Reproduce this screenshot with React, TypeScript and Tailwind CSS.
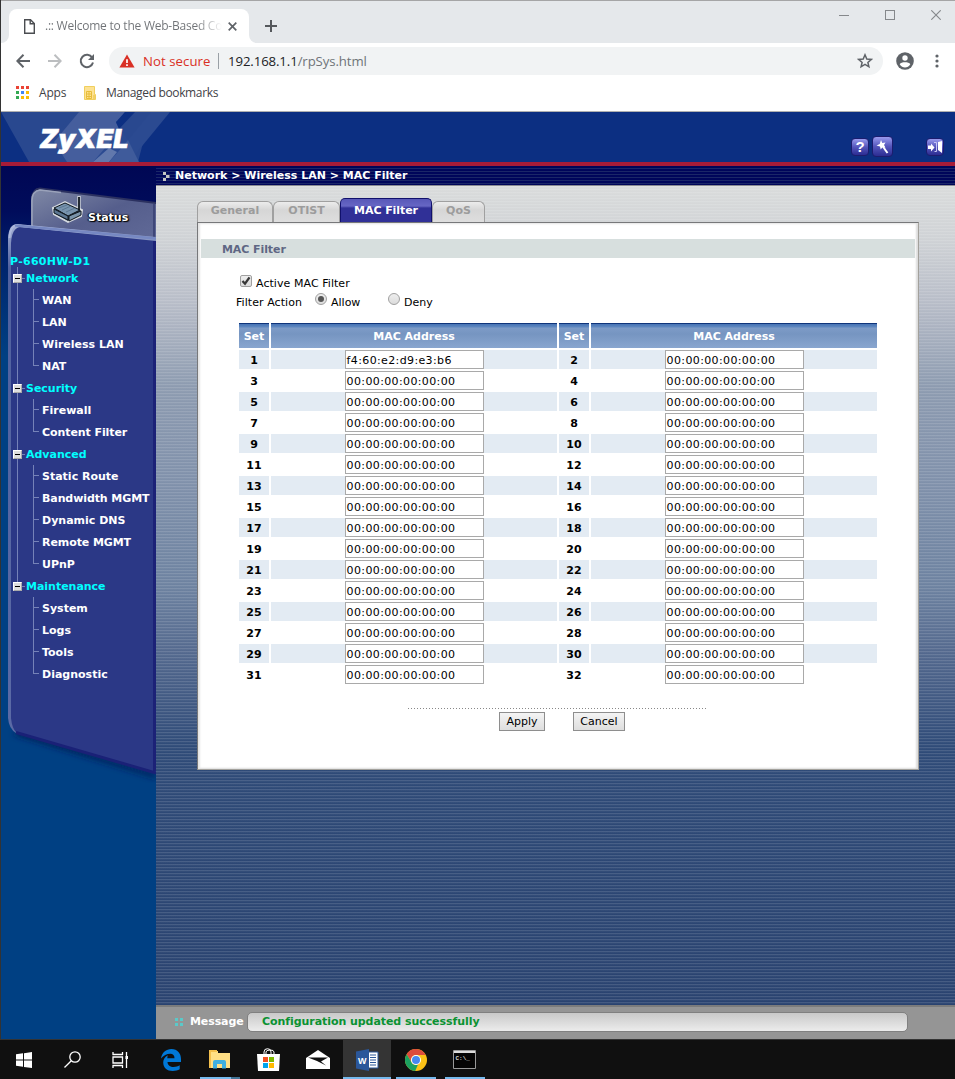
import React from "react";

const UI = "font-['Open_Sans','Noto_Sans',sans-serif]";
const VERDANA = "font-['DejaVu_Sans',Verdana,sans-serif]";

function TabStrip() {
  return (
    <div className="flex h-[43px] border-t border-[#a5a5a6] bg-[#e5e8eb]">
      <div className="flex w-2 flex-col justify-end bg-white">
        <div className="h-full rounded-br-[8px] bg-[#e5e8eb]" />
      </div>
      <div className="mt-2 flex w-[240px] items-center rounded-t-[8px] bg-white pl-[15px]">
        <svg width="11" height="15" viewBox="0 0 11 15" fill="none" stroke="#4a4d51" strokeWidth="1.4">
          <path d="M.7.7H6.5L10.3 4.5V14.3H.7Z" />
          <path d="M6.2.7V4.8H10.3" />
        </svg>
        <div className="ml-[10px] w-[177px] whitespace-nowrap bg-gradient-to-r from-[#6f7276] from-85% to-transparent bg-clip-text text-[12px] leading-[18px] tracking-[-0.24px] text-transparent">
          .:: Welcome to the Web-Based Co
        </div>
        <svg className="ml-[6px]" width="9" height="9" viewBox="0 0 9 9" stroke="#5f6368" strokeWidth="1.7">
          <path d="M.7.7 8.3 8.3M8.3.7.7 8.3" />
        </svg>
      </div>
      <div className="flex w-2 flex-col bg-white">
        <div className="h-full rounded-bl-[8px] bg-[#e5e8eb]" />
      </div>
      <svg className="ml-[8px] mt-[19px]" width="12" height="12" viewBox="0 0 12 12" stroke="#55585c" strokeWidth="2">
        <path d="M6 0V12M0 6H12" />
      </svg>
      <div className="flex-1" />
      <div className="mr-[14px] mt-[8px] flex h-[12px] items-center gap-[36px]">
        <svg width="10" height="10" stroke="#85888b" strokeWidth="1"><path d="M0 5.5H10" /></svg>
        <svg width="10" height="10" fill="none" stroke="#85888b"><rect x=".5" y=".5" width="9" height="9" /></svg>
        <svg width="10" height="10" stroke="#85888b" strokeWidth="1.1"><path d="M.3.3 9.7 9.7M9.7.3.3 9.7" /></svg>
      </div>
    </div>
  );
}

function Toolbar() {
  return (
    <div className="flex h-[36px] items-center bg-white pl-[15px] pr-[14px]">
      <svg width="14" height="14" viewBox="0 0 14 14" fill="none" stroke="#5f6368" strokeWidth="2"><path d="M14 7H1.5M7.5.8 1.3 7l6.2 6.2" /></svg>
      <svg className="ml-[18px]" width="14" height="14" viewBox="0 0 14 14" fill="none" stroke="#bcbec0" strokeWidth="2"><path d="M0 7H12.5M6.5.8 12.7 7l-6.2 6.2" /></svg>
      <svg className="ml-[17px]" width="16" height="16" viewBox="0 0 16 16">
        <path d="M13.2 4.6A6.2 6.2 0 1 0 14 9.6" fill="none" stroke="#5f6368" strokeWidth="2" />
        <path d="M15 1V7H9Z" fill="#5f6368" />
      </svg>
      <div className="ml-[14px] flex h-[28px] w-[774px] items-center rounded-full bg-[#f1f3f4] pl-[10px] pr-[10px] text-[14px]">
        <svg width="16" height="14" viewBox="0 0 16 14"><path d="M8 .5 15.6 13.6H.4Z" fill="#d93025" /><path d="M8 5.2V9M8 10.3v1.6" stroke="#fff" strokeWidth="1.7" /></svg>
        <span className="ml-[8px] w-[67px] whitespace-nowrap pt-px text-[13.2px] tracking-[0.06px] text-[#d93025]">Not secure</span>
        <span className="ml-[8px] h-[16px] w-px bg-[#9aa0a6]" />
        <span className="ml-[9px] whitespace-nowrap pt-px text-[13.2px] tracking-[-0.1px] text-[#6f7378]"><span className="text-[#202124]">192.168.1.1</span>/rpSys.html</span>
        <svg className="ml-auto" width="16" height="16" viewBox="0 0 16 16" fill="none" stroke="#5f6368" strokeWidth="1.5"><path d="M8 1.8 9.8 6l4.5.4-3.4 3 1 4.4L8 11.4l-3.9 2.4 1-4.4-3.4-3L6.2 6Z" /></svg>
      </div>
      <svg className="ml-[13px]" width="18" height="18" viewBox="0 0 18 18"><circle cx="9" cy="9" r="8.8" fill="#5f6368" /><circle cx="9" cy="6" r="2.7" fill="#fff" /><path d="M3.7 12.2C5 9.6 13 9.6 14.3 12.2 13 14.5 11 15.5 9 15.5S5 14.5 3.7 12.2Z" fill="#fff" /></svg>
      <svg className="ml-auto mr-[2px]" width="4" height="14" viewBox="0 0 4 14" fill="#5f6368"><circle cx="2" cy="2" r="1.6" /><circle cx="2" cy="7" r="1.6" /><circle cx="2" cy="12" r="1.6" /></svg>
    </div>
  );
}

const appDots = ["#ea4335", "#ea4335", "#ea4335", "#34a853", "#4285f4", "#fbbc05", "#34a853", "#fbbc05", "#fbbc05"];

function Bookmarks() {
  return (
    <div className="flex h-[33px] items-center border-b border-[#b0b0b0] bg-white pb-[5px] pl-[15px] text-[12px] text-[#3f4246]">
      <svg width="13" height="13">
        {appDots.map((c, i) => (
          <rect key={i} x={(i % 3) * 5} y={Math.floor(i / 3) * 5} width="3" height="3" fill={c} />
        ))}
      </svg>
      <span className="ml-[10px] w-[45px] pt-px tracking-[-0.2px]">Apps</span>
      <svg width="12" height="14"><path d="M.5.5h10v8h1v5H.5Z" fill="#fde293" stroke="#f0cf5e" /><path d="M2.5 5.5h5v7h-5ZM2.5 8h5M2.5 10.500h5M5 5.5v7M10 9v4" fill="none" stroke="#e8bd3a" /></svg>
      <span className="ml-[10px] whitespace-nowrap pt-px tracking-[-0.35px]">Managed bookmarks</span>
    </div>
  );
}

function HeaderButton({ children, big }: { children: React.ReactNode; big?: boolean }) {
  return (
    <div className={(big ? "size-[21px]" : "size-[18px]") + " flex items-center justify-center rounded-[4px] border border-[#1c1c6e] bg-gradient-to-b from-[#9a9aee] via-[#5555bb] via-50% to-[#2c2c92]"}>
      {children}
    </div>
  );
}

function Header() {
  return (
    <div className="relative h-[54px] border-b-4 border-[#a61c38] bg-[#0c2f82]">
      <svg width="180" height="50" className="block">
        <path d="M0 0H70L100 27 84 50H28Z" fill="#29488f" />
        <path d="M70 0H150L137 50H84L54 27Z" fill="#29488f" />
        <path d="M78 0H124L115 11 122 22 137 50H66L53 30Z" fill="#455e9d" />
        <path d="M135 0H169L128 50H92Z" fill="#2b4a91" />
        <path d="M150 0H135L115 10 127 28Z" fill="#29488f" />
        <path d="M124 0H134L118 17 115 10Z" fill="#0c2f82" />
        <path d="M108 36 116 40 108 50H92Z" fill="#6178ac" />
        <path d="M127 28 138 50H108L117 40Z" fill="#3f5b9b" />
        <text x="38.500" y="36" textLength="89" lengthAdjust="spacingAndGlyphs" fill="#fff" stroke="#fff" strokeWidth=".5" className="font-['Inter',sans-serif] text-[26px] font-black italic">ZyXEL</text>
      </svg>
      <div className="absolute right-[11px] top-[24px] flex items-center">
        <HeaderButton><span className="font-['Liberation_Sans',sans-serif] text-[15px] leading-none font-bold text-white">?</span></HeaderButton>
        <div className="ml-[3px] mr-[33px]">
          <HeaderButton big><svg width="14" height="15"><path d="M5 1 6.300 4 9.500 3.500 8 6 9.500 8.500 6.500 8.300 4.700 10.500 4 7.500 .5 6.500 3.700 5Z" fill="#fff" /><path d="M6.500 7 11.500 14" stroke="#fff" strokeWidth="2" /></svg></HeaderButton>
        </div>
        <HeaderButton><svg width="15" height="14" fill="#fff"><path d="M0 5.500H3V3.500L6.500 7.500 3 11.500V9H0ZM10 2l4-1v12l-4-3Z" /><path d="M6 2.500H8.500V11.500H6.500" fill="none" stroke="#c5c5f5" /></svg></HeaderButton>
      </div>
    </div>
  );
}

const tree = [
  { name: "Network", items: ["WAN", "LAN", "Wireless LAN", "NAT"] },
  { name: "Security", items: ["Firewall", "Content Filter"] },
  { name: "Advanced", items: ["Static Route", "Bandwidth MGMT", "Dynamic DNS", "Remote MGMT", "UPnP"] },
  { name: "Maintenance", items: ["System", "Logs", "Tools", "Diagnostic"] },
];

function SidebarArt() {
  return (
    <svg className="absolute left-0 top-0" width="155" height="640">
      <defs>
        <linearGradient id="tab" x1="0" y1="0" x2="1" y2="1"><stop offset="0" stopColor="#8089a6" /><stop offset=".5" stopColor="#555e8c" /><stop offset="1" stopColor="#626b99" /></linearGradient>
        <linearGradient id="edge" x1="0" y1="0" x2="0" y2="1"><stop offset="0" stopColor="#a5b1d6" /><stop offset=".08" stopColor="#50619f" /><stop offset="1" stopColor="#5c6ba6" /></linearGradient>
        <filter id="soft"><feGaussianBlur stdDeviation="3" /></filter>
      </defs>
      <path d="M12 568 155 612V608L20 564Z" fill="#001f55" filter="url(#soft)" />
      <path d="M30 75V32Q31 22 39 21.500L155 36V80Z" fill="#2b3160" />
      <path d="M30 75V34Q31 24 39 23.500L155 38V80Z" fill="url(#tab)" />
      <path d="M31 60V35Q31 25 39 24L60 26.500" fill="none" stroke="#9aa2ba" strokeWidth="1.500" />
      <path d="M153 38V75" stroke="#3f4779" strokeWidth="2" />
      <path d="M7 72Q8 58 16 58L155 71V607L15 567Q8 563 7 552Z" fill="url(#edge)" />
      <path d="M10 77Q11 62 19 61L155 75V607L15 566Q11 562 10 552Z" fill="#2b3886" />
      <path d="M8.500 72Q9 59.500 16 59.500L80 65.500" fill="none" stroke="#adb8dc" strokeWidth="2" />
      <path d="M14 59.500 155 72.500" stroke="#7688c2" strokeWidth="2.500" />
      <path d="M153.500 75V605" stroke="#1c2277" strokeWidth="3" />
      <path d="M15 566.500 155 607" stroke="#1a2177" strokeWidth="3" />
    </svg>
  );
}

function StatusLink() {
  return (
    <div className="flex h-[86px] pl-[50px] pt-[29px]">
      <svg width="34" height="29" viewBox="0 0 34 29">
        <path d="M28 15V1" stroke="#c9ced5" strokeWidth="3.500" />
        <path d="M2 13 14 7 31 15 30 21 17 27 3 19Z" fill="#202c3d" stroke="#d4d9df" strokeWidth="2" />
        <path d="M3 13 14 8 29 15 17 21Z" fill="#7894ae" stroke="#101820" />
        <path d="M3 14 17 21V25L3 18Z" fill="#5b7691" stroke="#101820" />
        <path d="M18 21 30 16V20L18 26Z" fill="#7a94ab" stroke="#101820" />
        <path d="M28 15V2" stroke="#101820" strokeWidth="1.800" />
        <path d="M8 13 16 10M11 15 20 11M15 17 24 13" stroke="#5b7691" />
      </svg>
      <span className="ml-[3px] mt-[14px] text-[11px] font-bold leading-[18px] text-white [text-shadow:1px_1px_1px_#000,-1px_0_1px_#000,1px_0_2px_#000]">Status</span>
    </div>
  );
}

const childTracking: Record<string, string> = {
  "Bandwidth MGMT": "tracking-[-0.09px]",
  "Remote MGMT": "tracking-[-0.08px]",
  "Content Filter": "tracking-[-0.08px]",
};

function Sidebar() {
  return (
    <aside className="relative w-[155px] shrink-0 bg-[#004083] bg-[linear-gradient(to_bottom,#000754_0px,#000c5b_45px,#002069_85px,#004083_190px)]">
      <SidebarArt />
      <div className="relative text-[11px] font-bold">
        <StatusLink />
        <div className="h-[15px] pl-[9px] leading-[20px] tracking-[0.28px] text-[#00ffff]">P-660HW-D1</div>
        {tree.map((g, gi) => (
          <div key={g.name}>
            <div className="flex h-[22px] items-center">
              <div className="ml-[12px] flex h-full w-[9px] flex-col items-center">
                <span className="h-[7px] w-px bg-[#7582b8]" />
                <span className="flex size-[9px] items-center justify-center border border-[#a9a9a9] border-t-white border-l-white bg-[#dedede]"><span className="h-px w-[5px] bg-black" /></span>
                <span className={gi < 3 ? "h-[6px] w-px bg-[#7582b8]" : "h-[6px] w-px"} />
              </div>
              <span className="h-px w-[3px] bg-[#7582b8]" />
              <span className="ml-px mt-[2px] whitespace-nowrap leading-[22px] tracking-[-0.02px] text-[#00ffff]">{g.name}</span>
            </div>
            {g.items.map((t, i) => (
              <div key={t} className="flex h-[22px]">
                <span className={gi < 3 ? "ml-[16px] w-px bg-[#7582b8]" : "ml-[16px] w-px"} />
                <span className={(i === g.items.length - 1 ? "h-[11px]" : "h-[22px]") + " ml-[15px] w-px bg-[#7582b8]"} />
                <span className="mt-[10px] h-px w-[5px] bg-[#7582b8]" />
                <span className="ml-[3px] whitespace-nowrap leading-[24px]">
                  <span className={"text-white " + (childTracking[t] ?? "")}>{t}</span>
                </span>
              </div>
            ))}
          </div>
        ))}
      </div>
    </aside>
  );
}

function Breadcrumb() {
  return (
    <div className="flex h-[20px] items-center border-b border-[#8a8b91] bg-[repeating-linear-gradient(to_bottom,#00065a_0px,#00065a_2px,#1b2767_2px,#1b2767_3px)] pl-[7px]">
      <svg className="mt-[2px]" width="7" height="9" fill="#c4c4c4"><path d="M0 0h3v3H0zM3 3h3.500v3H3zM0 6h3v3H0z" /></svg>
      <span className="ml-[5px] whitespace-nowrap text-[11px] font-bold leading-[19px] text-white">Network &gt; Wireless LAN &gt; MAC Filter</span>
    </div>
  );
}

function Tab({ label, width }: { label: string; width: string }) {
  return (
    <div className={width + " flex h-[21px] items-start justify-center rounded-t-[6px] border border-b-0 border-[#a0a0a0] bg-gradient-to-b from-[#ececec] via-[#d6d6d6] via-40% to-[#dedede] text-[11px] font-bold leading-[17px] text-[#9c9c9c]"}>
      {label}
    </div>
  );
}

function MacInput({ value }: { value: string }) {
  return (
    <div className="h-[19px] w-[139px] border border-[#a9a9a9] bg-white pl-[0.6px] text-[11px] leading-[19px] tracking-[0.37px] text-black">
      {value}
    </div>
  );
}

function MacTable() {
  const rows = Array.from({ length: 16 }, (_, i) => i);
  const head = "flex h-[25px] items-center justify-center border-t border-[#10357b] bg-[linear-gradient(to_bottom,#4773b4_0px,#5f88c0_3px,#7d9bc7_4px,#7695c1_10px,#89a6cf_24px)] pt-[2px] text-[11px] font-bold text-white";
  return (
    <div className="ml-[41px] mt-[12px] w-[638px]">
      <div className="grid grid-cols-[30px_286px_30px_286px] gap-[2px]">
        <div className={head}>Set</div>
        <div className={head}>MAC Address</div>
        <div className={head}>Set</div>
        <div className={head}>MAC Address</div>
      </div>
      <div className="mt-[2px] flex flex-col gap-[2px]">
        {rows.map((r) => {
          const bg = r % 2 === 0 ? "bg-[#e3ebf3]" : "bg-white";
          return (
            <div key={r} className="grid grid-cols-[30px_286px_30px_286px] grid-rows-[19px] gap-[2px]">
              {[0, 1].map((c) => (
                <React.Fragment key={c}>
                  <div className={bg + " h-[19px] text-center text-[11px] font-bold leading-[22px] text-black"}>{r * 2 + c + 1}</div>
                  <div className={bg + " flex h-[19px] pl-[74px]"}>
                    <MacInput value={r === 0 && c === 0 ? "f4:60:e2:d9:e3:b6" : "00:00:00:00:00:00"} />
                  </div>
                </React.Fragment>
              ))}
            </div>
          );
        })}
      </div>
    </div>
  );
}

function Radio({ on }: { on?: boolean }) {
  return (
    <span className="flex size-[12px] items-center justify-center rounded-full border border-[#a0a0a0] bg-gradient-to-b from-[#eeeeee] to-[#dcdcdc]">
      {on && <span className="size-[6px] rounded-full bg-[#555]" />}
    </span>
  );
}

function Panel() {
  const button = "flex h-[19px] items-center justify-center border border-[#8e8e8e] bg-gradient-to-b from-[#f4f4f4] to-[#dedede] pt-[2px] text-[11px] text-black";
  return (
    <div className="h-[548px] w-[722px] border border-[#77787a] border-b-[#a3a19c] border-r-[#a3a19c] bg-white pt-[16px] shadow-[inset_2px_1px_2px_#e4e4e4,inset_-2px_-1px_2px_#dcdcdc]">
      <div className="mx-[3px] h-[19px] bg-[#d7dfde] pl-[21px] text-[11px] font-bold leading-[22px] tracking-[-0.08px] text-[#5f6784]">MAC Filter</div>
      <div className="mt-[15px] flex h-[20px] items-center pl-[42px] text-[11px] leading-[20px]">
        <span className="mb-[5px] flex size-[12px] items-center justify-center rounded-[2px] border border-[#a0a0a0] bg-gradient-to-b from-[#eeeeee] to-[#dcdcdc]">
          <svg width="10" height="10" fill="none" stroke="#383838" strokeWidth="2.300"><path d="M1.500 5 4 7.700 8.500 1.300" /></svg>
        </span>
        <span className="ml-[4px] mt-[2px] tracking-[0.06px]">Active MAC Filter</span>
      </div>
      <div className="flex h-[18px] items-center pl-[38px] text-[11px]">
        <span className="mt-[2px] w-[79px] whitespace-nowrap tracking-[0.06px]">Filter Action</span>
        <span className="mb-[6px]"><Radio on /></span>
        <span className="ml-[4px] mt-[2px] w-[57px]">Allow</span>
        <span className="mb-[6px]"><Radio /></span>
        <span className="ml-[4px] mt-[2px]">Deny</span>
      </div>
      <MacTable />
      <div className="ml-[210px] mt-[24px] h-px w-[299px] bg-[repeating-linear-gradient(to_right,#888_0px,#888_1px,transparent_1px,transparent_3px)]" />
      <div className="mt-[3px] flex gap-[28px] pl-[301px]">
        <div className={button + " w-[46px]"}>Apply</div>
        <div className={button + " w-[52px]"}>Cancel</div>
      </div>
    </div>
  );
}

function MainArea() {
  return (
    <main className="flex h-full flex-1 flex-col">
      <Breadcrumb />
      <div className="flex-1 bg-[repeating-linear-gradient(to_bottom,rgba(255,255,255,0.13)_0px,rgba(255,255,255,0.13)_1px,rgba(255,255,255,0.03)_1px,rgba(255,255,255,0.03)_2px,transparent_2px,transparent_3px),linear-gradient(to_bottom,#d9dbdb_0px,#d0d3d6_50px,#b8bdc8_115px,#8d9bb0_200px,#7f90aa_300px,#6d82a0_400px,#54698e_465px,#2f4b78_560px,#2a4370_100%)] pl-[41px] pt-[12px]">
        <div className="flex items-end pl-0">
          <Tab label="General" width="w-[76px]" />
          <Tab label="OTIST" width="w-[67px]" />
          <div className="flex h-[24px] w-[92px] justify-center rounded-t-[5px] border border-b-0 border-[#11116c] bg-[linear-gradient(to_bottom,#5858b8_0px,#6666c4_7px,#303097_9px,#303097_100%)] text-[11px] font-bold leading-[23px] tracking-[-0.08px] text-white">MAC Filter</div>
          <Tab label="QoS" width="w-[53px]" />
        </div>
        <Panel />
      </div>
      <div className="flex h-[34px] items-center border-t-2 border-[#7c7c7c] bg-[#959595] pb-[2px] pl-[19px]">
        <svg width="8" height="8" fill="#5bc9c9"><path d="M0 0h3v3H0zM5 0h3v3H5zM0 5h3v3H0zM5 5h3v3H5z" /></svg>
        <span className="ml-[7px] w-[57px] text-[11px] font-bold text-white tracking-[-0.1px]">Message</span>
        <div className="h-[20px] w-[661px] rounded-[5px] border border-[#808080] bg-gradient-to-b from-[#c9c9c9] to-[#ececec] pl-[14px] text-[11px] font-bold leading-[18px] tracking-[-0.06px] text-[#0b9232]">Configuration updated successfully</div>
      </div>
    </main>
  );
}

function TaskCell({ children, className }: { children?: React.ReactNode; className?: string }) {
  return <div className={"flex h-full shrink-0 items-center justify-center " + (className ?? "w-[48px]")}>{children}</div>;
}

function Taskbar() {
  return (
    <div className="flex h-[40px] border-t border-[#333] bg-[#101010]">
      <TaskCell><svg width="16" height="16" fill="#fff"><path d="M0 2.300 7 1.300V7.500H0ZM8 1.200 16 0V7.500H8ZM0 8.500H7V14.800L0 13.800ZM8 8.500H16V16L8 14.900Z" /></svg></TaskCell>
      <TaskCell><svg width="17" height="17" fill="none" stroke="#fff" strokeWidth="1.300"><circle cx="11" cy="6" r="5.200" /><path d="M7.300 9.700.5 16.500" /></svg></TaskCell>
      <TaskCell><svg width="17" height="16" fill="none" stroke="#fff" strokeWidth="1.300"><path d="M1 0V2.500H10.500V0M1 16V13.500H10.500V16M1 5H10.500V11H1ZM14.500 0V16" /><path d="M13.500 4h2.500v3h-2.500z" fill="#fff" stroke="none" /></svg></TaskCell>
      <TaskCell className="ml-[3px] w-[48px]">
        <svg width="20" height="22" viewBox="0 0 20 22"><path d="M0 9.500C1 3.500 5 0 10.500 0 16.500 0 20 4.500 20 10V13H6.500C6.700 16.500 9.200 18 12.500 18 15 18 17 17.300 18.700 16.300V20.300C16.800 21.400 14.500 22 11.700 22 6 22 2.200 18.500 2.200 13.500 2.200 10.200 4 7.500 7 6.200 6.500 7 6.300 8 6.300 9.200H13.500C13.500 6.500 12 4.800 9.300 4.800 5.700 4.800 2.500 6.700 0 9.500Z" fill="#0078d7" /></svg>
      </TaskCell>
      <TaskCell className="relative ml-px w-[48px]">
        <svg width="22" height="20"><path d="M0 1H9V3H21V18H0Z" fill="#ffdf85" /><path d="M0 1H2V18H0ZM0 0h8v2H0z" fill="#f4c04d" /><path d="M4 18.500V12Q4 10 6 10H15Q17 10 17 12V18.500H13V14H8V18.500Z" fill="#3fafe0" /></svg>
        <span className="absolute bottom-0 left-[4px] h-[2px] w-[31px] bg-[#76b9ed]" />
        <span className="absolute bottom-0 left-[35px] h-[2px] w-[9px] bg-[#427395]" />
      </TaskCell>
      <TaskCell className="ml-px w-[48px] pr-[2px]">
        <svg width="24" height="24"><path d="M1 6H24L23 23H2Z" fill="#fff" /><path d="M8 6V4Q8 .7 11.500.7T15 4V6M10 6V4Q10 2 14 2T18 4V6" fill="none" stroke="#fff" /><path d="M7 9h5v5H7z" fill="#f25022" /><path d="M13 9h5v5h-5z" fill="#7fba00" /><path d="M7 15h5v5H7z" fill="#00a4ef" /><path d="M13 15h5v5h-5z" fill="#ffb900" /></svg>
      </TaskCell>
      <TaskCell className="ml-px w-[48px]">
        <svg width="24" height="20"><path d="M0 8 12 0 24 8V19H0Z" fill="#fff" /><path d="M2 7.500H22L15 11.500 20 15.500 11 11Z" fill="#101010" /></svg>
      </TaskCell>
      <TaskCell className="relative ml-px w-[48px] bg-[#343434]">
        <svg width="23" height="22"><path d="M12 3H22V19H12Z" fill="#fff" stroke="#2b579a" strokeWidth="1" /><path d="M14 6H20M14 8.500H20M14 11H20M14 13.500H20M14 16H20" stroke="#2b579a" /><path d="M0 2.500 13 0V22L0 19.500Z" fill="#2b579a" /><text x="2" y="14.500" fill="#fff" className="font-['Liberation_Sans',sans-serif] text-[9px] font-bold">W</text></svg>
        <span className="absolute bottom-0 left-0 h-[2px] w-[48px] bg-[#76b9ed]" />
      </TaskCell>
      <TaskCell className="relative ml-px w-[48px]">
        <svg width="22" height="22" viewBox="0 0 22 22"><circle cx="11" cy="11" r="11" fill="#fbc116" /><path d="M11 0A11 11 0 0 1 20.600 6H11A5 5 0 0 0 6.700 13.500L1.600 5.200A11 11 0 0 1 11 0Z" fill="#dd4b3e" /><path d="M1.600 5.300 6.700 13.500A5 5 0 0 0 13 15.500L10.200 22A11 11 0 0 1 1.600 5.300Z" fill="#1ba160" /><circle cx="11" cy="11" r="5" fill="#fff" /><circle cx="11" cy="11" r="4" fill="#4688f1" /></svg>
        <span className="absolute bottom-0 left-[4px] h-[2px] w-[40px] bg-[#76b9ed]" />
      </TaskCell>
      <TaskCell className="relative ml-px w-[48px] pr-[2px]">
        <svg width="23" height="19"><path d="M.5.5H22.500V18.500H.5Z" fill="#050505" stroke="#999" /><path d="M1 2H22" stroke="#ddd" strokeWidth="2" /><text x="2.500" y="9.500" fill="#ddd" className="font-['Liberation_Mono',monospace] text-[6px] font-bold">C:\_</text></svg>
        <span className="absolute bottom-0 left-[4px] h-[2px] w-[40px] bg-[#76b9ed]" />
      </TaskCell>
    </div>
  );
}

export default function App() {
  return (
    <div className="h-[1079px] w-[955px] overflow-hidden bg-[#101010]">
      <div className={"border-l border-[#333] " + UI}>
        <TabStrip />
        <Toolbar />
        <Bookmarks />
        <div className={VERDANA}>
          <Header />
          <div className="flex h-[873px]">
            <Sidebar />
            <MainArea />
          </div>
        </div>
      </div>
      <Taskbar />
    </div>
  );
}
